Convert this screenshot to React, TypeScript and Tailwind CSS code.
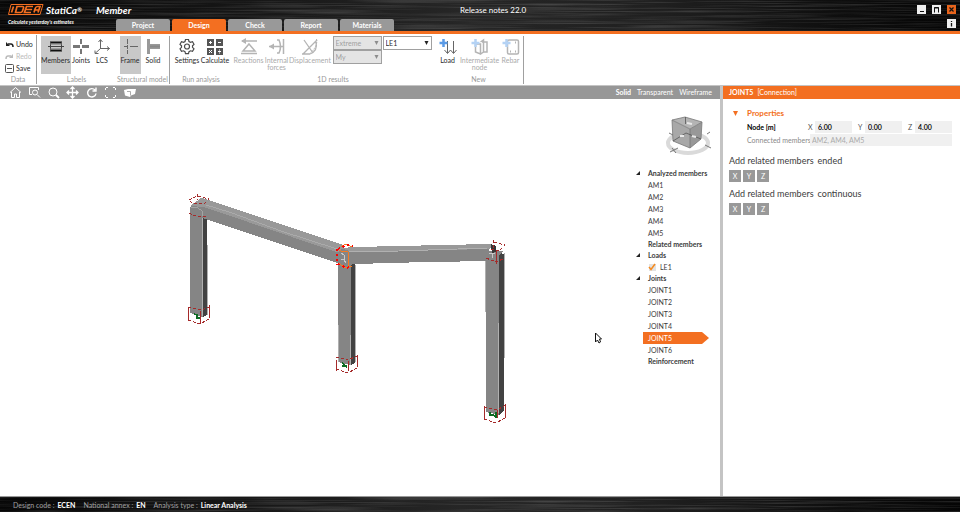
import React, { useState } from "react";

type IconProps = { children: React.ReactNode; w?: number; h?: number };

function Icon({ children, w = 18, h = 17 }: IconProps) {
  return (
    <svg width={w} height={h} viewBox={`0 0 ${w} ${h}`} fill="none" className="shrink-0" aria-hidden="true">
      {children}
    </svg>
  );
}

function BrushedMetal({ id }: { id: string }) {
  return (
    <svg className="absolute inset-0 -z-10 h-full w-full" preserveAspectRatio="none" aria-hidden="true">
      <defs>
        <linearGradient id={`${id}-base`}>
          <stop offset="0" stopColor="#060606" />
          <stop offset="0.22" stopColor="#141414" />
          <stop offset="0.48" stopColor="#262626" />
          <stop offset="0.68" stopColor="#202020" />
          <stop offset="0.85" stopColor="#101010" />
          <stop offset="1" stopColor="#050505" />
        </linearGradient>
        <filter id={`${id}-grain`} x="0" y="0" width="100%" height="100%">
          <feTurbulence type="fractalNoise" baseFrequency="0.008 0.7" numOctaves="3" seed="4" />
          <feColorMatrix values="0 0 0 0 1  0 0 0 0 1  0 0 0 0 1  1.1 0 0 0 -0.45" />
        </filter>
      </defs>
      <rect width="100%" height="100%" fill={`url(#${id}-base)`} />
      <rect width="100%" height="100%" filter={`url(#${id}-grain)`} opacity="0.3" />
    </svg>
  );
}

const tabs = ["Project", "Design", "Check", "Report", "Materials"];

function Header() {
  const [active, setActive] = useState("Design");
  return (
    <header className="relative isolate shrink-0 border-b-[3px] border-[#f36f21] text-white">
      <BrushedMetal id="header" />
      <div className="flex h-[19px] items-center">
        <div className="flex w-[134px] shrink-0 items-center whitespace-nowrap pl-2 font-bold italic">
          <svg width="36" height="11" viewBox="0 0 36 11" fill="none" stroke="#f36f21" role="img" aria-label="IDEA">
            <path d="M3 .5h32l-3 10H.500z" strokeWidth="1" />
            <path d="M5.500 2.500l-2 6M9 2.500h5.500q1.500 0 1 1.500l-1 3q-.5 1.500-2 1.500H7.500zM25 2.500h-6.500l-2 6h6.500M18 5.500h6M26 8.500l1.200-4q.6-2 2.300-2h2.500l-2 6M27 6h4.500" strokeWidth="1.700" />
          </svg>
          <span className="ml-[2px] text-[10px] leading-none">StatiCa</span>
          <span className="text-[6px] leading-none">®</span>
          <span className="ml-[14px] text-[10px] leading-none">Member</span>
        </div>
        <h1 className="flex-1 text-center text-[8px]">Release notes 22.0</h1>
        <div className="flex w-[108px] items-center justify-end gap-[6px] pr-1">
          <button aria-label="Minimize" className="size-[9px] bg-[#eeeeee]">
            <Icon w={9} h={9}><path d="M3 6.500h4" stroke="#111" /></Icon>
          </button>
          <button aria-label="Maximize" className="size-[9px] bg-[#eeeeee]">
            <Icon w={9} h={9}><path d="M2.500 7.500v-5h4v5M2 3h5" stroke="#111" /></Icon>
          </button>
          <button aria-label="Close" className="size-[9px] bg-[#e8641c]">
            <Icon w={9} h={9}><path d="M2.500 2.500l4 4M6.500 2.500l-4 4" stroke="#111" strokeWidth="1.200" /></Icon>
          </button>
        </div>
      </div>
      <div className="flex h-3">
        <p className="w-[116px] shrink-0 whitespace-nowrap pl-2 text-[5px] font-bold italic leading-[6px]">
          Calculate yesterday's estimates
        </p>
        <nav className="flex flex-1 gap-[2px]" aria-label="Ribbon tabs">
          {tabs.map((t) => (
            <button
              key={t}
              onClick={() => setActive(t)}
              className={`h-3 w-[54px] rounded-t-[2px] text-[7px] font-bold leading-3 ${t === active ? "bg-[#f36f21]" : "bg-[#999999]"}`}
            >
              {t}
            </button>
          ))}
        </nav>
        <button aria-label="Information" className="mr-1 size-[9px] bg-[#eeeeee]">
          <Icon w={9} h={9}><path d="M4.500 2v1M4.500 4v3.500" stroke="#111" strokeWidth="1.300" /></Icon>
        </button>
      </div>
    </header>
  );
}

function Tool({ label, icon, width, on, off }: { label: string; icon: React.ReactNode; width: string; on?: boolean; off?: boolean }) {
  return (
    <button
      disabled={off}
      className={`flex h-[38px] ${width} shrink-0 flex-col items-center pt-[2px] text-[7px] leading-[7px] ${on ? "bg-[#c8c8c8]" : ""} ${off ? "text-[#aaaaaa]" : "text-[#2b2b2b]"}`}
    >
      {icon}
      <span className="mt-[2px] text-center">{label}</span>
    </button>
  );
}

function Group({ caption, width, children, line }: { caption: string; width: string; children: React.ReactNode; line?: boolean }) {
  return (
    <section className={`flex shrink-0 flex-col justify-between ${width} ${line ? "border-r border-[#a0a0a0]" : ""}`}>
      <div className="flex h-[38px] justify-center">{children}</div>
      <h2 className="whitespace-nowrap text-center text-[7px] leading-[10px] text-[#999999]">{caption}</h2>
    </section>
  );
}

const dark = "#4a4a4a";
const pale = "#b4b4b4";

function Ribbon() {
  const quick = "flex h-3 items-center gap-[2px] text-[7px] leading-none";
  return (
    <div className="flex h-[51px] shrink-0 overflow-hidden bg-white py-[1px]">
      <section className="flex w-[37px] shrink-0 flex-col justify-between border-r border-[#a0a0a0]">
        <div className="flex flex-col pl-[5px] pt-[3px]">
          <button className={`${quick} text-[#2b2b2b]`}>
            <Icon w={9} h={9}><path d="M1 2v4h4z" fill="#222" /><path d="M3 4h3q2 0 2 3" stroke="#222" strokeWidth="1.500" /></Icon>
            Undo
          </button>
          <button disabled className={`${quick} text-[#bbbbbb]`}>
            <Icon w={9} h={9}><path d="M8 2v4H4z" fill="#bbb" /><path d="M6 4H3q-2 0-2 3" stroke="#bbb" strokeWidth="1.500" /></Icon>
            Redo
          </button>
          <button className={`${quick} text-[#2b2b2b]`}>
            <Icon w={9} h={9}><rect x=".5" y=".5" width="8" height="8" rx="1" stroke="#555" /><path d="M2 4.500h5" stroke="#555" /></Icon>
            Save
          </button>
        </div>
        <h2 className="text-center text-[7px] leading-[10px] text-[#999999]">Data</h2>
      </section>

      <div className="flex pt-[1px]">
        <Group caption="Labels" width="w-[79px]">
          <Tool label="Members" width="w-[30px]" on icon={
            <Icon><path d="M3 4.500h12M3 12.500h12" stroke="#111" strokeWidth="2" /><path d="M1 8.500h16M3.500 4v9M14.500 4v9" stroke="#444" /><path d="M3 6h12M3 11h12" stroke="#777" /></Icon>} />
          <Tool label="Joints" width="w-[21px]" icon={
            <Icon><path d="M1 8.500h7M10 8.500h7" stroke="#777" strokeWidth="3" /><path d="M9 1v5M9 11v5" stroke="#777" strokeWidth="2" /></Icon>} />
          <Tool label="LCS" width="w-[21px]" icon={
            <Icon><path d="M7.500 11V2M7.500 10.500h9M7.500 10.500L2 15.500M5.500 4l2-2.500L9.500 4M14 8.500l2.500 2-2.500 2M2 12.500v3h3.500" stroke="#666" /></Icon>} />
        </Group>
        <Group caption="Structural model" width="w-[54px]" line>
          <Tool label="Frame" width="w-[21px]" on icon={
            <Icon><path d="M6.500 1v5M6.500 7v4M6.500 12v4M3 8.500h4M9 8.500h8" stroke="#666" /></Icon>} />
          <Tool label="Solid" width="w-[25px]" icon={
            <Icon><path d="M4.500 1v15" stroke="#999" strokeWidth="3" /><path d="M6 8.500h10" stroke="#999" strokeWidth="5" /><path d="M6 8.500h10" stroke="#888" strokeWidth="2" /></Icon>} />
        </Group>
        <Group caption="Run analysis" width="w-[62px]">
          <Tool label="Settings" width="w-[28px]" icon={
            <Icon><path d="M7.500 1.500h3l.5 2 1.500.8 2-.6 1.500 2.600-1.500 1.500v1.500l1.500 1.500-1.500 2.600-2-.6-1.500.8-.5 2h-3l-.5-2-1.500-.8-2 .6L2 10.800l1.500-1.500V7.800L2 6.300l1.500-2.600 2 .6L7 3.500z" stroke={dark} strokeWidth="1.200" /><circle cx="9" cy="8.500" r="2.500" stroke={dark} strokeWidth="1.200" /></Icon>} />
          <Tool label="Calculate" width="w-[28px]" icon={
            <Icon><path d="M1 1h7v7H1zM10 1h7v7h-7zM1 10h7v7H1zM10 10h7v7h-7z" fill="#555" /><path d="M3 4.500h3M4.500 3v3M12 4.500h3M3 12l3 3M6 12l-3 3M12 13.500h3M13.500 11.500v1M13.500 14.500v1" stroke="#fff" /></Icon>} />
        </Group>
        <Group caption="1D results" width="w-[202px]">
          <Tool label="Reactions" width="w-[28px]" off icon={
            <Icon><path d="M2 3h15M1 15.500h16M9 6l6 7H3z" stroke={pale} strokeWidth="1.500" /><path d="M6 0v6L1 3z" fill={pale} /></Icon>} />
          <Tool label="Internal forces" width="w-[28px]" off icon={
            <Icon><path d="M1 8.500h15M9 2h2q3 6.500 0 13H9M15.500 1v15" stroke={pale} strokeWidth="1.500" /><path d="M6 5.500v6L1 8.500z" fill={pale} /></Icon>} />
          <Tool label="Displacement" width="w-[39px]" off icon={
            <Icon><path d="M2 16L16 2M3 2l9 13M1 16h8M9 16q8-3 6-12" stroke={pale} strokeWidth="1.300" /><path d="M15.500 1q1.500 7-6 14" stroke={pale} strokeDasharray="2 1" /></Icon>} />
          <div className="ml-[3px] flex w-[49px] flex-col">
            <Select label="Result type" value="Extreme" off />
            <Select label="Component" value="My" off />
          </div>
          <div className="ml-[1px] w-[49px]">
            <Select label="Load effect" value="LE1" />
          </div>
        </Group>
        <Group caption="New" width="w-[90px]" line>
          <Tool label="Load" width="w-[22px]" icon={
            <Icon><path d="M8.500 3v12M14.500 3v12M5.500 12l3 3.500 3-3.500M11.500 12l3 3.500 3-3.500" stroke="#666" /><path d="M4.500 1v8M.5 5h8" stroke="#5b9be6" strokeWidth="2.500" /></Icon>} />
          <Tool label="Intermediate node" width="w-[42px]" off icon={
            <Icon><path d="M4.500 6v8l5 2V6zM9.500 4l3-2v12l-3 2M11 4h5v10h-4" stroke={pale} strokeWidth="1.500" /><path d="M4.500 1v8M.5 5h8" stroke="#b4d2f4" strokeWidth="2.500" /></Icon>} />
          <Tool label="Rebar" width="w-[20px]" off icon={
            <Icon><rect x="5.500" y="2" width="11" height="14" rx="1.500" stroke={pale} strokeWidth="1.500" /><path d="M8 13.500h1M13 13.500h1M13 4.500h1" stroke={pale} strokeWidth="2" /><path d="M4.500 1v8M.5 5h8" stroke="#b4d2f4" strokeWidth="2.500" /></Icon>} />
        </Group>
      </div>
    </div>
  );
}

function Select({ label, value, off }: { label: string; value: string; off?: boolean }) {
  return (
    <label className="grid grid-cols-1 items-center">
      <select
        aria-label={label}
        disabled={off}
        className={`col-start-1 row-start-1 h-[14px] w-full appearance-none border border-[#a0a0a0] pl-[2px] text-[7px] leading-none opacity-100 ${off ? "bg-[#e4e4e4] text-[#a0a0a0]" : "bg-white text-[#2b2b2b]"}`}
      >
        <option>{value}</option>
      </select>
      <svg width="5" height="4" viewBox="0 0 5 4" className="pointer-events-none col-start-1 row-start-1 mr-[3px] justify-self-end" aria-hidden="true">
        <path d="M.5 0h4l-2 4z" fill={off ? "#8c8c8c" : "#222"} />
      </svg>
    </label>
  );
}

const viewTools: { name: string; art: React.ReactNode }[] = [
  { name: "Home", art: <path d="M1 6.500L6.500 1.500l5.500 5M2.500 6v5.500h3V8h2v3.500h3V6" /> },
  { name: "Zoom window", art: <><path d="M4 8.500H1.500v-7h9V4" /><circle cx="7" cy="6.500" r="2.500" /><path d="M9 8.500l3 3" /></> },
  { name: "Zoom", art: <><circle cx="6" cy="6" r="4" /><path d="M9 9l3 3" strokeWidth="1.800" /></> },
  { name: "Pan", art: <path d="M6.500 1v11M1 6.500h11M4.500 3l2-2 2 2M4.500 10l2 2 2-2M3 4.500l-2 2 2 2M10 4.500l2 2-2 2" strokeWidth="1.300" /> },
  { name: "Rotate", art: <path d="M10 4a4.200 4.200 0 1 0 1 3.500M11 1.500V5H7.500" strokeWidth="1.400" /> },
  { name: "Fit", art: <path d="M1.500 4V1.500H4M9 1.500h2.500V4M1.500 9v2.500H4M9 11.500h2.500V9" strokeDasharray="2 1" /> },
  { name: "Section", art: <><path d="M1 4l4-1 8 0-1 5-4 1.500-1 1.500-5-1.500z" fill="#fff" stroke="none" /><path d="M4 5.500h3.500M7.500 5.500v4" stroke="#979797" strokeWidth="0.800" /></> },
];

function ViewBar() {
  return (
    <div className="flex h-[13px] shrink-0 items-center justify-between bg-[#979797] pl-[9px] pr-2 text-[7px] text-white">
      <div className="flex gap-[6px]">
        {viewTools.map((v) => (
          <button key={v.name} aria-label={v.name} className="size-[13px]">
            <svg width="13" height="13" viewBox="0 0 13 13" fill="none" stroke="#fff" aria-hidden="true">{v.art}</svg>
          </button>
        ))}
      </div>
      <div className="flex gap-[6px] leading-[13px]">
        <button className="font-bold">Solid</button>
        <button>Transparent</button>
        <button>Wireframe</button>
      </div>
    </div>
  );
}

function Scene() {
  return (
    <svg viewBox="0 99 630 397" className="h-full min-w-0 flex-1" shapeRendering="crispEdges" role="img" aria-label="Frame model">
      {/* left column */}
      <path d="M190 207h13v110l-13-4z" fill="#858585" />
      <path d="M203 214h4v101l-4 2z" fill="#424242" />
      <path d="M202.500 211v105M207.500 245v70" stroke="#b0b0b0" />
      {/* left beam */}
      <path d="M190 207l6-5 147 45v18l-6-2-134-45-13-9z" fill="#858585" />
      <path d="M190 206l7-5 4-3 5 1 137 46-2 6-5 1-132-45z" fill="#999999" />
      <path d="M191 207l7 1 4 3v5M206 205l26 8 49 18 56 18" stroke="#b0b0b0" strokeWidth="0.700" fill="none" />
      {/* middle column */}
      <path d="M338 260h13v105l-13-3z" fill="#858585" />
      <path d="M351 263h4v100l-4 2z" fill="#424242" />
      <path d="M338.500 325v37M350.500 335v30M355.500 265v97" stroke="#b0b0b0" fill="none" />
      {/* right column */}
      <path d="M486 251h14v164l-14-3z" fill="#858585" />
      <path d="M499 253l5 1v157l-5 4z" fill="#424242" />
      <path d="M485.500 252v60M498.500 323v90M504.500 253v105" stroke="#b0b0b0" />
      {/* right beam */}
      <path d="M341 249h148l-3 12-103 2-42 2z" fill="#858585" />
      <path d="M341 248l14-1 133-3 5 1-3 4-138 3z" fill="#999999" />
      <path d="M349 252l50-1 88-3" stroke="#b0b0b0" fill="none" />
      <path d="M486 251h17l-4 4h-13z" fill="#858585" />
      <path d="M491 244l5 2v6l-4 1z" fill="#383838" />
      {/* bounding boxes of the nodes */}
      <g fill="none" stroke="#a52a2a" strokeDasharray="3 2">
        <path d="M189 200l8-4 12 3-5 5-12-1zM197.500 194v6M189 213l9 4 8-1" />
        <path d="M494 242l11 3-6 6-9-2M493.500 240v8M486 258l10 4 9-4" />
        <path d="M188 307l13 3 8-3M188 320l12 4 9-5" />
        <path d="M336 357l12 3 9-4M336 369l12 4 9-5" />
        <path d="M484 407l13 3 9-5M484 419l12 4 9-5" />
      </g>
      <path d="M188.500 307v14M200.500 311v13M209.500 305v13M336.500 360v11M348.500 361v10M357.500 355v12M484.500 406v13M497.500 410v8M505.500 404v14M496.500 251v13" stroke="#a52a2a" />
      <path d="M194 314l3 1v3h3M342 363l5 4M342 366h5M490 412v3h3l3 2v-5" stroke="#0b6b22" strokeWidth="1.500" fill="none" />
      {/* selected node */}
      <path d="M337 249l4 2 7 1v14M338 263l8 5 6-2M341 247l5-3 6 3" stroke="#f77a20" fill="none" />
      <path d="M336.500 249v16M338 249l9-4 6 1M338 264l9 4 5-2" stroke="#f00" strokeWidth="2" strokeDasharray="2 3" fill="none" />
      <path d="M341 253l3 2v5l-3-1M344 260l2 3M489 253h6M492.500 254v4" stroke="#c8c8c8" fill="none" />
      {/* pointer */}
      <path d="M595.500 333v9l2-2 1.500 3 1.500-1-1-3h2z" fill="#fff" stroke="#111" shapeRendering="auto" />
    </svg>
  );
}

function ViewCube() {
  return (
    <svg width="48" height="42" viewBox="0 0 48 42" fill="none" aria-hidden="true">
      <ellipse cx="25" cy="29" rx="20" ry="10" stroke="#dadada" strokeWidth="4" />
      <path d="M9 6l18 9v19l-17-7z" fill="#a8a8a8" />
      <path d="M27 15l12-7-1 17-11 9z" fill="#989898" />
      <path d="M9 6l13-3 17 5-12 7z" fill="#b4b4b4" />
      <path d="M9 6l18 9 12-7M27 15v19M9 6l1 21 17 7 11-9 1-17M9 6l13-3 17 5" stroke="#777" strokeWidth="0.800" />
      <path d="M22.500 3v7M10 27l13-8 15 6" stroke="#555" strokeWidth="0.800" />
      <path d="M7 38l8-4M9 34l4 5M42 31l6 3M6 19l4 2M44 20l3-2" stroke="#777" />
      <path d="M17 22h4M29 22l4 1M24 9l5 1" stroke="#e8e8e8" strokeWidth="2" />
    </svg>
  );
}

type Row = { text: string; head?: boolean; arrow?: boolean; check?: boolean };

const rows: Row[] = [
  { text: "Analyzed members", head: true, arrow: true },
  { text: "AM1" }, { text: "AM2" }, { text: "AM3" }, { text: "AM4" }, { text: "AM5" },
  { text: "Related members", head: true },
  { text: "Loads", head: true, arrow: true },
  { text: "LE1", check: true },
  { text: "Joints", head: true, arrow: true },
  { text: "JOINT1" }, { text: "JOINT2" }, { text: "JOINT3" }, { text: "JOINT4" }, { text: "JOINT5" }, { text: "JOINT6" },
  { text: "Reinforcement", head: true },
];

function Tree() {
  const [selected, setSelected] = useState("JOINT5");
  return (
    <ul className="flex flex-col pl-[6px] pr-[11px] text-[7px] text-[#3c3c3c]">
      {rows.map((r) =>
        r.head ? (
          <li key={r.text} className="flex h-[11px] items-center whitespace-nowrap font-bold leading-[11px]">
            <svg width="12" height="5" viewBox="0 0 12 5" className="shrink-0" aria-hidden="true">
              {r.arrow && <path d="M4 0v4H0z" fill="#222" />}
            </svg>
            {r.text}
          </li>
        ) : r.check ? (
          <li key={r.text} className="h-3 pl-[12px]">
            <label className="flex items-center gap-[4px] leading-3">
              <span className="grid size-[8px] place-items-center">
                <input type="checkbox" defaultChecked className="peer col-start-1 row-start-1 size-[7px] appearance-none bg-[#e2e2e2]" />
                <svg width="8" height="8" viewBox="0 0 8 8" fill="none" className="pointer-events-none invisible col-start-1 row-start-1 peer-checked:visible" aria-hidden="true">
                  <path d="M1 4l2 2.500L7 1" stroke="#f58a1f" strokeWidth="1.500" />
                </svg>
              </span>
              {r.text}
            </label>
          </li>
        ) : (
          <li key={r.text} className="h-3 pl-[7px]">
            <button
              onClick={() => setSelected(r.text)}
              className={`block h-3 w-full pl-[5px] text-left leading-3 ${r.text === selected ? "bg-[#f36f21] text-white [clip-path:polygon(0_0,calc(100%-7px)_0,100%_50%,calc(100%-7px)_100%,0_100%)]" : ""}`}
            >
              {r.text}
            </button>
          </li>
        ),
      )}
    </ul>
  );
}

function AxisField({ axis, value }: { axis: string; value: string }) {
  return (
    <label className="flex flex-1 items-center">
      <span className="w-[7px] text-[#555]">{axis}</span>
      <input defaultValue={value} className="h-3 w-[37px] min-w-0 flex-1 bg-[#f0f0f0] pl-[3px] text-[7px] font-semibold text-black" />
    </label>
  );
}

function AxisButtons() {
  return (
    <div className="flex gap-[2px]">
      {["X", "Y", "Z"].map((a) => (
        <button key={a} className="size-3 bg-[#999999] text-[7px] leading-3 text-white">{a}</button>
      ))}
    </div>
  );
}

function Panel() {
  return (
    <aside className="flex w-[237px] shrink-0 flex-col bg-white">
      <h2 className="flex h-[13px] shrink-0 gap-[4px] bg-[#f36f21] pl-[6px] text-[7px] leading-[13px] text-white">
        <span className="font-bold">JOINT5</span>
        <span>[Connection]</span>
      </h2>
      <div className="pl-[6px] pr-2 pt-2">
        <h3 className="flex h-3 items-center text-[8px] font-bold text-[#f36f21]">
          <svg width="18" height="5" viewBox="0 0 18 5" aria-hidden="true"><path d="M4 0h5L6.500 5z" fill="#f36f21" /></svg>
          Properties
        </h3>
        <div className="mt-[2px] flex items-center gap-[6px] pl-[18px] text-[7px] leading-3">
          <span className="w-[55px] font-bold text-black">Node [m]</span>
          <AxisField axis="X" value="6.00" />
          <AxisField axis="Y" value="0.00" />
          <AxisField axis="Z" value="4.00" />
        </div>
        <label className="mt-[1px] flex items-center pl-[18px] text-[7px] leading-3 text-[#888]">
          <span className="w-[63px] shrink-0 whitespace-nowrap">Connected members</span>
          <input readOnly value="AM2, AM4, AM5" className="h-3 w-full min-w-0 bg-[#f0f0f0] pl-[2px] text-[7px] text-[#aaa]" />
        </label>
        <h3 className="mt-[9px] flex gap-[4px] text-[9px] leading-3 text-[#3c3c3c]">
          <span>Add related members</span><span>ended</span>
        </h3>
        <div className="mt-[3px]"><AxisButtons /></div>
        <h3 className="mt-[6px] flex gap-[4px] text-[9px] leading-3 text-[#3c3c3c]">
          <span>Add related members</span><span>continuous</span>
        </h3>
        <div className="mt-[3px]"><AxisButtons /></div>
      </div>
    </aside>
  );
}

function Footer() {
  const items = [
    ["Design code :", "ECEN"],
    ["National annex :", "EN"],
    ["Analysis type :", "Linear Analysis"],
  ];
  return (
    <footer className="relative isolate flex h-4 shrink-0 items-center gap-[8px] border-t border-[#999] pl-[13px] pt-[1px] text-[7px] leading-none">
      <BrushedMetal id="footer" />
      {items.map(([k, v]) => (
        <span key={k} className="flex gap-[3px] whitespace-nowrap">
          <span className="text-[#a0a0a0]">{k}</span>
          <span className="font-bold text-white">{v}</span>
        </span>
      ))}
    </footer>
  );
}

export default function App() {
  return (
    <div className="flex h-screen flex-col overflow-hidden bg-white font-[Lato,'Noto_Sans',sans-serif]">
      <Header />
      <Ribbon />
      <main className="flex min-h-0 flex-1 border-t border-[#c4c4c4]">
        <div className="flex min-w-0 flex-1 flex-col">
          <ViewBar />
          <div className="flex min-h-0 flex-1">
            <Scene />
            <div className="flex w-[90px] shrink-0 flex-col pt-[15px]">
              <div className="flex h-[54px] justify-center pl-6"><ViewCube /></div>
              <Tree />
            </div>
          </div>
        </div>
        <div className="w-[3px] shrink-0 bg-[#c4c4c4]" />
        <Panel />
      </main>
      <Footer />
    </div>
  );
}
